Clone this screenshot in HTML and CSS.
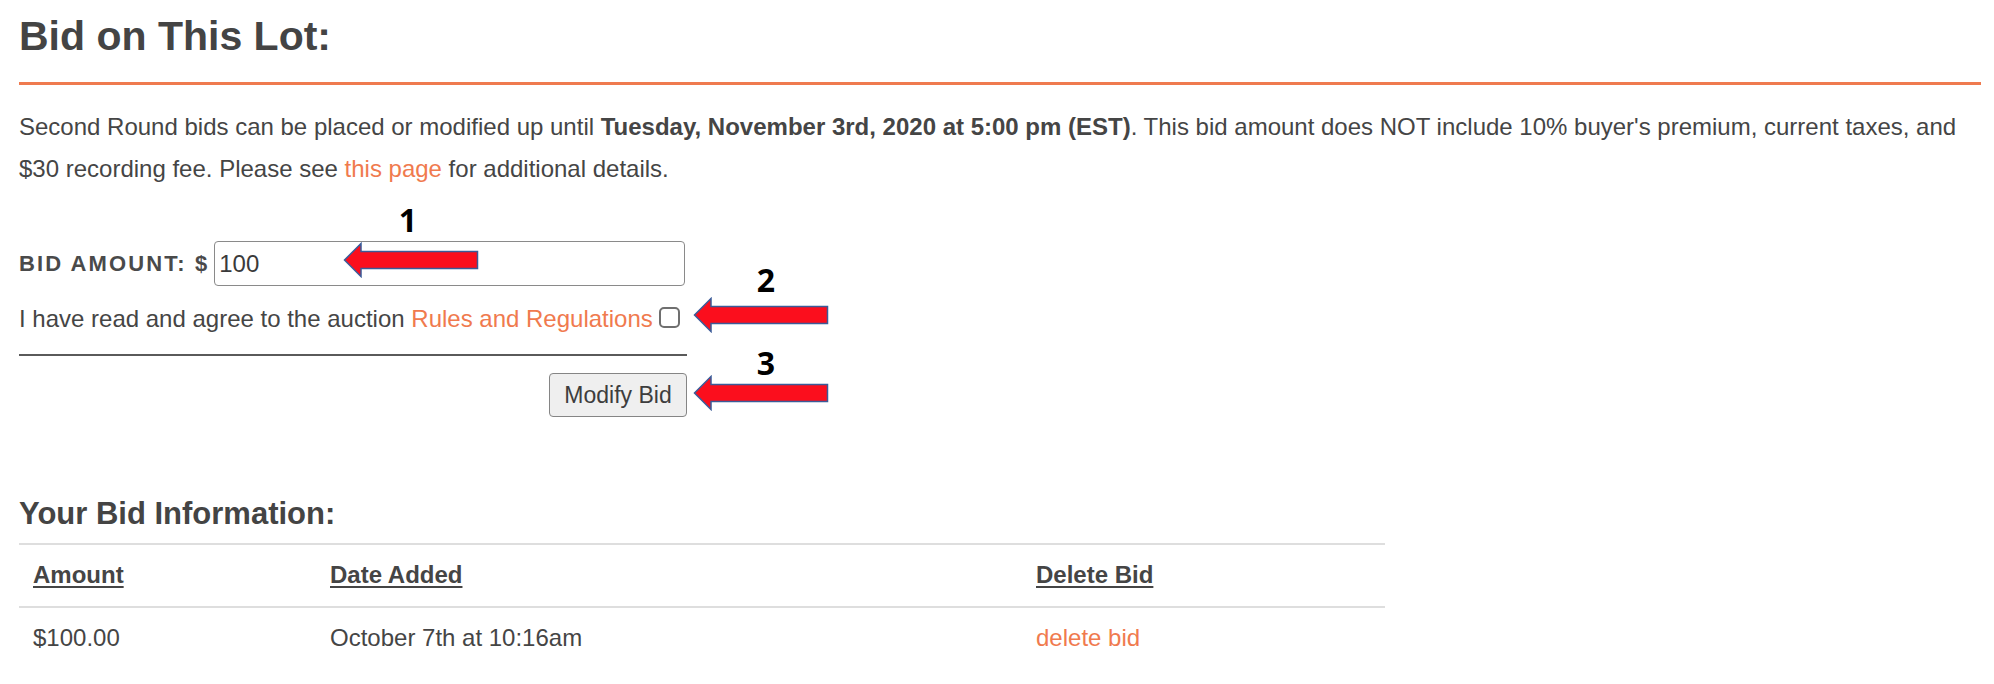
FILE: index.html
```html
<!DOCTYPE html>
<html>
<head>
<meta charset="utf-8">
<link rel="stylesheet" href="styles.css">
</head>
<body>
<div class="page">
  <h1 class="title">Bid on This Lot:</h1>
  <p class="intro">Second Round bids can be placed or modified up until <b>Tuesday, November 3rd, 2020 at 5:00 pm (EST)</b>. This bid amount does NOT include 10% buyer's premium, current taxes, and $30 recording fee. Please see <a class="link" href="#">this page</a> for additional details.</p>

  <form class="bid-form">
    <div class="amount-row">
      <label class="amount-label">BID AMOUNT: $</label>
      <input class="amount-input" type="text" value="100">
    </div>
    <div class="agree-row">I have read and agree to the auction <a class="link" href="#">Rules and Regulations</a> <input class="agree-box" type="checkbox"></div>
    <div class="divider"></div>
    <div class="submit-row"><button class="submit-btn" type="button">Modify Bid</button></div>
  </form>

  <h2 class="subtitle">Your Bid Information:</h2>
  <table class="bids">
    <colgroup><col class="c1"><col class="c2"><col class="c3"></colgroup>
    <thead>
      <tr><th>Amount</th><th>Date Added</th><th>Delete Bid</th></tr>
    </thead>
    <tbody>
      <tr><td>$100.00</td><td>October 7th at 10:16am</td><td><a class="link" href="#">delete bid</a></td></tr>
    </tbody>
  </table>

  <span class="num num1">1</span>
  <span class="num num2">2</span>
  <span class="num num3">3</span>
  <svg class="arrow arrow1" viewBox="0 0 136 36" width="136" height="36"><path d="M1.5 18 L18 1.5 L18 9.5 L134.5 9.5 L134.5 26.5 L18 26.5 L18 34.5 Z" fill="#fb0e1d" stroke="#3b5b98" stroke-width="1.5" stroke-linejoin="miter"/></svg>
  <svg class="arrow arrow2" viewBox="0 0 136 36" width="136" height="36"><path d="M1.5 18 L18 1.5 L18 9.5 L134.5 9.5 L134.5 26.5 L18 26.5 L18 34.5 Z" fill="#fb0e1d" stroke="#3b5b98" stroke-width="1.5" stroke-linejoin="miter"/></svg>
  <svg class="arrow arrow3" viewBox="0 0 136 36" width="136" height="36"><path d="M1.5 18 L18 1.5 L18 9.5 L134.5 9.5 L134.5 26.5 L18 26.5 L18 34.5 Z" fill="#fb0e1d" stroke="#3b5b98" stroke-width="1.5" stroke-linejoin="miter"/></svg>
</div>
</body>
</html>
```
FILE: styles.css
```css
html, body {
  margin: 0;
  padding: 0;
  background: #ffffff;
}
body {
  font-family: "Liberation Sans", Arial, Helvetica, sans-serif;
  color: #454545;
}
.page {
  position: relative;
  padding: 12px 13px 0 19px;
}
.title {
  margin: 0;
  font-size: 41px;
  line-height: 48px;
  font-weight: bold;
  color: #444444;
  padding-bottom: 22px;
  border-bottom: 3px solid #ef7a4f;
}
.intro {
  margin: 21px 0 0 0;
  font-size: 24px;
  line-height: 42px;
}
.intro b {
  font-weight: bold;
}
.link {
  color: #f07a4e;
  text-decoration: none;
}
.bid-form {
  width: 668px;
  margin: 51px 0 0 0;
}
.amount-row {
  display: flex;
  align-items: center;
  height: 45px;
}
.amount-label {
  font-size: 22px;
  font-weight: bold;
  letter-spacing: 2.1px;
  color: #4a4a4a;
  margin-right: 5px;
}
.amount-input {
  box-sizing: border-box;
  width: 471px;
  height: 45px;
  border: 1.5px solid #8a8a8a;
  border-radius: 4px;
  padding: 0 4px;
  font-family: "Liberation Sans", Arial, sans-serif;
  font-size: 24px;
  color: #3a3a3a;
  outline: none;
}
.agree-row {
  margin-top: 17px;
  font-size: 24px;
  line-height: 32px;
}
.agree-box {
  appearance: none;
  -webkit-appearance: none;
  box-sizing: border-box;
  width: 21px;
  height: 21px;
  margin: 0;
  border: 2px solid #6f6f6f;
  border-radius: 5px;
  background: #fff;
  vertical-align: -1px;
}
.divider {
  margin-top: 19px;
  height: 2px;
  background: #5a5a5a;
}
.submit-row {
  display: flex;
  justify-content: flex-end;
  margin-top: 17px;
}
.submit-btn {
  box-sizing: border-box;
  height: 44px;
  width: 138px;
  padding: 0;
  border: 1.5px solid #858585;
  border-radius: 4px;
  background: #efefef;
  font-family: "Liberation Sans", Arial, sans-serif;
  font-size: 23px;
  color: #3d3d3d;
}
.subtitle {
  margin: 79px 0 0 0;
  font-size: 31px;
  line-height: 36px;
  font-weight: bold;
  color: #444;
}
.bids {
  margin-top: 11px;
  width: 1366px;
  border-collapse: collapse;
  font-size: 24px;
  line-height: 28px;
}
.c1 { width: 297px; }
.c2 { width: 706px; }
.c3 { width: 363px; }
.bids th, .bids td {
  text-align: left;
  padding: 16px 14px 17px 14px;
}
.bids thead tr {
  border-top: 2px solid #dedede;
  border-bottom: 2px solid #dedede;
}
.bids th {
  font-weight: bold;
  text-decoration: underline;
  text-underline-offset: 3px;
  text-decoration-thickness: 2px;
  color: #454545;
}
.num {
  position: absolute;
  width: 30px;
  text-align: center;
  font-family: "Open Sans", "Noto Sans", sans-serif;
  font-weight: bold;
  font-size: 32px;
  line-height: 32px;
  color: #000;
}
.num1 { left: 393px; top: 204px; }
.num2 { left: 751px; top: 264px; }
.num3 { left: 751px; top: 347px; }
.arrow {
  position: absolute;
  display: block;
}
.arrow1 { left: 343px; top: 242px; }
.arrow2 { left: 693px; top: 297px; }
.arrow3 { left: 693px; top: 375px; }
```
